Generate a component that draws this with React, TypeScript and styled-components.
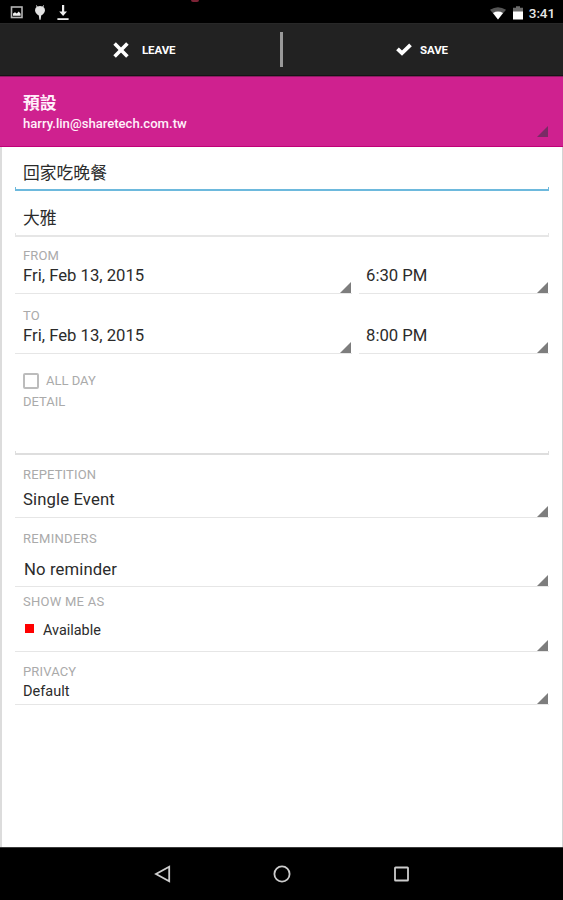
import React from "react";
import styled, { createGlobalStyle } from "styled-components";

const GlobalStyle = createGlobalStyle`
  * { box-sizing: border-box; }
  html, body { margin: 0; padding: 0; background: #fff; }
  body { font-family: Roboto, "Noto Sans CJK TC", sans-serif; }
`;

const Screen = styled.div`
  width: 563px;
  height: 900px;
  display: flex;
  flex-direction: column;
  overflow: hidden;
  background: #fff;
`;

const StatusBar = styled.header`
  position: relative;
  height: 23px;
  flex: none;
  display: flex;
  justify-content: space-between;
  background: #000;
  color: #e6e6e6;
`;

const RecordingMark = styled.i`
  position: absolute;
  left: 191px;
  top: 0;
  width: 8px;
  height: 2px;
  border-radius: 0 0 2px 2px;
  background: #7d2336;
`;

const StatusGroup = styled.div<{ $end?: boolean }>`
  display: flex;
  align-items: center;
  padding: ${(p) => (p.$end ? "3px 8px 0 0" : "2px 0 0 10px")};
`;

const StatusIcon = styled.svg<{ $gap: number }>`
  display: block;
  margin-right: ${(p) => p.$gap}px;
`;

const Clock = styled.span`
  font-size: 13.5px;
  line-height: 18px;
  font-weight: 500;
  letter-spacing: -0.1px;
`;

const ActionBar = styled.nav`
  height: 53px;
  flex: none;
  display: grid;
  grid-template-columns: 280px 3px 280px;
  align-items: center;
  background: #222;
  border-bottom: 1px solid #151515;
  border-top: 1px solid #282828;
`;

const Divider = styled.span`
  height: 35px;
  background: #999;
`;

const Action = styled.button<{ $indent: number; $gap: number }>`
  height: 51px;
  display: flex;
  align-items: center;
  gap: ${(p) => p.$gap}px;
  padding: 0 0 0 ${(p) => p.$indent}px;
  border: 0;
  background: none;
  color: #fff;
  font: 700 11.5px/16px Roboto, sans-serif;
  letter-spacing: -0.1px;
`;

const Account = styled.section`
  height: 71px;
  flex: none;
  display: flex;
  justify-content: space-between;
  align-items: flex-end;
  padding: 0 15px 9px 23px;
  background: #cf218f;
  border-top: 1px solid #8d1c63;
  border-bottom: 1px solid #c00077;
  color: #fff0fa;
`;

const AccountText = styled.div`
  align-self: flex-start;
  padding-top: 15px;
`;

const AccountName = styled.div`
  font-size: 16.8px;
  line-height: 22px;
  font-weight: 700;
`;

const AccountMail = styled.div`
  font-size: 13.1px;
  line-height: 20px;
  font-weight: 500;
`;

const Form = styled.main`
  flex: 1;
  display: flex;
  flex-direction: column;
  padding: 0 13px;
  border-left: 2px solid #dcdcdc;
  border-right: 1px solid #d4d4d4;
`;

const EditField = styled.div<{ $height: number; $line: string; $thick: number }>`
  height: ${(p) => p.$height}px;
  flex: none;
  display: flex;
  flex-direction: column;
  padding-left: 8px;
  background:
    linear-gradient(${(p) => p.$line}, ${(p) => p.$line}) left bottom / 1px 2px no-repeat,
    linear-gradient(${(p) => p.$line}, ${(p) => p.$line}) right bottom / 1px 2px no-repeat;
  border-bottom: ${(p) => p.$thick}px solid ${(p) => p.$line};
`;

const PickerRow = styled.div`
  display: grid;
  grid-template-columns: 337px 190px;
  column-gap: 7px;
`;

const Picker = styled.div<{ $height: number; $pad?: number }>`
  height: ${(p) => p.$height}px;
  flex: none;
  display: flex;
  justify-content: space-between;
  align-items: flex-end;
  padding: 0 1px 0 ${(p) => p.$pad ?? 8}px;
  border-bottom: 1px solid #e6e6e6;
`;

const PickerBody = styled.div`
  align-self: flex-start;
`;

const Label = styled.div<{ $top: number; $track?: number }>`
  margin-top: ${(p) => p.$top}px;
  font-size: 13px;
  line-height: 16px;
  letter-spacing: ${(p) => p.$track ?? 0.15}px;
  color: #aaa;
`;

const Value = styled.div<{ $top: number; $size?: number; $track?: number; $indent?: number }>`
  margin-top: ${(p) => p.$top}px;
  padding-left: ${(p) => p.$indent ?? 0}px;
  display: flex;
  align-items: center;
  font-size: ${(p) => p.$size ?? 16.7}px;
  line-height: 20px;
  letter-spacing: ${(p) => p.$track ?? 0}px;
  color: #2b2b2b;
`;

const CheckRow = styled.label`
  display: flex;
  align-items: center;
  gap: 7px;
  margin-top: 18px;
  height: 17px;
  font-size: 13px;
  line-height: 17px;
  color: #aaa;
`;

const CheckBox = styled.span`
  width: 16px;
  height: 16px;
  border: 2px solid #bcbcbc;
  border-radius: 2px;
`;

const Swatch = styled.span`
  width: 9px;
  height: 9px;
  margin: -5px 9px 0 0;
  background: #f00;
`;

const Corner = styled.svg`
  display: block;
  flex: none;
`;

const NavBar = styled.footer`
  height: 53px;
  flex: none;
  display: flex;
  justify-content: center;
  align-items: center;
  gap: 102px;
  background: #000;
  border-top: 1px solid #3c3c3c;
`;

const Triangle = ({ color = "#7d7d7d" }: { color?: string }) => (
  <Corner width="11" height="11" viewBox="0 0 11 11">
    <path d="M11 0V11H0Z" fill={color} />
  </Corner>
);

export default function App() {
  return (
    <>
      <GlobalStyle />
      <Screen>
        <StatusBar>
          <RecordingMark />
          <StatusGroup>
            <StatusIcon $gap={11} width="13" height="13" viewBox="0 0 13 13">
              <rect x="1.5" y="1" width="10.5" height="10.5" fill="none" stroke="#b5b5b5" strokeWidth="1.6" />
              <path d="M3 9.8V7.6L5 6.2L6.8 7.6L8.8 5.6L10.6 7.8V9.8Z" fill="#eee" />
            </StatusIcon>
            <StatusIcon $gap={11} width="12" height="15" viewBox="0 0 12 15">
              <path
                d="M1.4 3.6Q1.6 2.4 2.7 1.9L1.9.4L2.6.2L3.5 1.5Q6 .7 8.5 1.5L9.4.2L10.1.4L9.3 1.9Q10.4 2.4 10.6 3.6L11 5.3Q10.6 8.8 7.2 10.4L6.6 14.8H5.4L4.8 10.4Q1.4 8.8 1 5.3Z"
                fill="#e2e2e2"
              />
            </StatusIcon>
            <StatusIcon $gap={0} width="12" height="16" viewBox="0 0 12 16">
              <path d="M5 0H7.2V6.4H10L6.1 11L2.2 6.4H5Z" fill="#eee" />
              <path d="M.4 13.2H11.6V15H.4Z" fill="#eee" />
            </StatusIcon>
          </StatusGroup>
          <StatusGroup $end>
            <StatusIcon $gap={7} width="16" height="13" viewBox="0 0 16 13">
              <path d="M0 2.7Q8-2.4 16 2.7L8 12.5Z" fill="#555" />
              <path d="M3 6Q8 3.1 13 6L8 12.5Z" fill="#fff" />
            </StatusIcon>
            <StatusIcon $gap={6} width="10" height="14" viewBox="0 0 10 14">
              <path d="M0 1.8H3V.2H7V1.8H10V6H0Z" fill="#6b6b6b" />
              <path d="M0 5.5H10V13.5H0Z" fill="#fff" />
            </StatusIcon>
            <Clock>3:41</Clock>
          </StatusGroup>
        </StatusBar>

        <ActionBar>
          <Action $indent={113} $gap={13}>
            <svg width="16" height="16" viewBox="0 0 16 16">
              <path d="M1.6 1.6L14.4 14.4M14.4 1.6L1.6 14.4" stroke="#fff" strokeWidth="3.6" />
            </svg>
            <span>LEAVE</span>
          </Action>
          <Divider />
          <Action $indent={113} $gap={8}>
            <svg width="16" height="13" viewBox="0 0 16 13">
              <path d="M1.5 5.8L6 10.2L14.5 1.9" fill="none" stroke="#fff" strokeWidth="3.8" />
            </svg>
            <span>SAVE</span>
          </Action>
        </ActionBar>

        <Account>
          <AccountText>
            <AccountName>預設</AccountName>
            <AccountMail>harry.lin@sharetech.com.tw</AccountMail>
          </AccountText>
          <Triangle color="#792b65" />
        </Account>

        <Form>
          <EditField $height={44} $line="#6db9dd" $thick={2}>
            <Value $top={16} $size={16.8}>回家吃晚餐</Value>
          </EditField>
          <EditField $height={46} $line="#e6e6e6" $thick={2}>
            <Value $top={17} $size={16.8}>大雅</Value>
          </EditField>

          <PickerRow>
            <Picker $height={57}>
              <PickerBody>
                <Label $top={11}>FROM</Label>
                <Value $top={2}>Fri, Feb 13, 2015</Value>
              </PickerBody>
              <Triangle />
            </Picker>
            <Picker $height={57} $pad={7}>
              <PickerBody>
                <Value $top={29}>6:30 PM</Value>
              </PickerBody>
              <Triangle />
            </Picker>
          </PickerRow>
          <PickerRow>
            <Picker $height={60}>
              <PickerBody>
                <Label $top={14}>TO</Label>
                <Value $top={2}>Fri, Feb 13, 2015</Value>
              </PickerBody>
              <Triangle />
            </Picker>
            <Picker $height={60} $pad={7}>
              <PickerBody>
                <Value $top={32}>8:00 PM</Value>
              </PickerBody>
              <Triangle />
            </Picker>
          </PickerRow>

          <EditField $height={101} $line="#dedede" $thick={2}>
            <CheckRow>
              <CheckBox />
              ALL DAY
            </CheckRow>
            <Label $top={5} $track={0}>DETAIL</Label>
          </EditField>

          <Picker $height={63}>
            <PickerBody>
              <Label $top={12}>REPETITION</Label>
              <Value $top={7} $track={0.12}>Single Event</Value>
            </PickerBody>
            <Triangle />
          </Picker>
          <Picker $height={69}>
            <PickerBody>
              <Label $top={13} $track={0.3}>REMINDERS</Label>
              <Value $top={13} $indent={1} $track={0.12}>No reminder</Value>
            </PickerBody>
            <Triangle />
          </Picker>
          <Picker $height={65}>
            <PickerBody>
              <Label $top={7} $track={0.25}>SHOW ME AS</Label>
              <Value $top={11} $size={14.4} $indent={2}>
                <Swatch />
                Available
              </Value>
            </PickerBody>
            <Triangle />
          </Picker>
          <Picker $height={53}>
            <PickerBody>
              <Label $top={12}>PRIVACY</Label>
              <Value $top={2} $size={14.5}>Default</Value>
            </PickerBody>
            <Triangle />
          </Picker>
        </Form>

        <NavBar>
          <svg width="17" height="18" viewBox="0 0 17 18">
            <path d="M15.2 1.8V16.2L2 9Z" fill="none" stroke="#ccc" strokeWidth="1.8" />
          </svg>
          <svg width="18" height="18" viewBox="0 0 18 18">
            <circle cx="9" cy="9" r="7.6" fill="none" stroke="#ccc" strokeWidth="1.8" />
          </svg>
          <svg width="17" height="18" viewBox="0 0 17 18">
            <rect x="2" y="2.5" width="13" height="13" rx=".6" fill="none" stroke="#ccc" strokeWidth="1.8" />
          </svg>
        </NavBar>
      </Screen>
    </>
  );
}
